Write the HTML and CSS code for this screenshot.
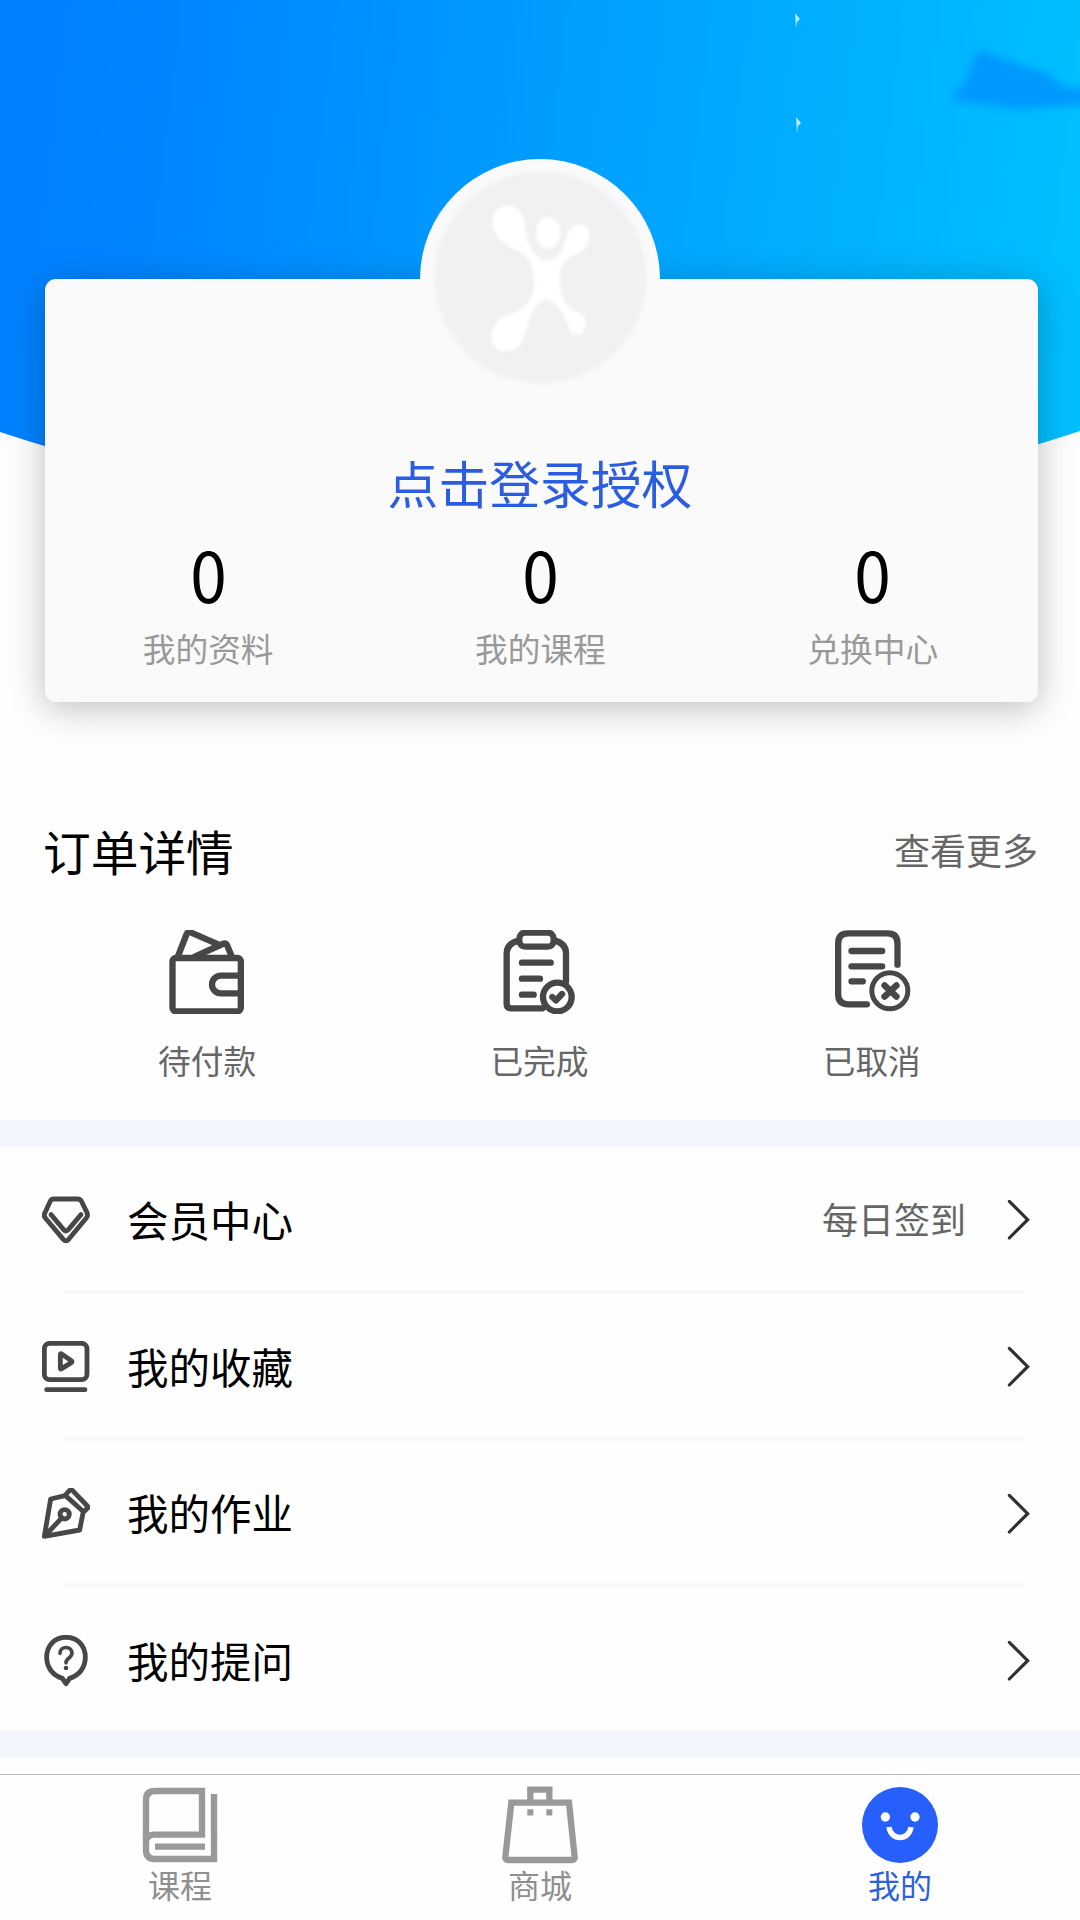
FILE: index.html
```html
<!DOCTYPE html>
<html lang="zh-CN">
<head>
<meta charset="utf-8">
<title>我的</title>
<link rel="stylesheet" href="styles.css">
</head>
<body>
<div class="page">
  <header class="hero">
    <svg class="hero-bg" viewBox="0 0 1080 560">
      <defs>
        <linearGradient id="sky" gradientUnits="userSpaceOnUse" x1="0" y1="0" x2="1090" y2="130">
          <stop offset="0" stop-color="#0081ff"/>
          <stop offset="0.14" stop-color="#0084ff"/>
          <stop offset="0.3" stop-color="#008fff"/>
          <stop offset="0.52" stop-color="#009eff"/>
          <stop offset="0.75" stop-color="#00afff"/>
          <stop offset="1" stop-color="#00bfff"/>
        </linearGradient>
        <filter id="soft" x="-20%" y="-30%" width="140%" height="160%"><feGaussianBlur stdDeviation="4"/></filter>
      </defs>
      <path d="M0 0H1080V431Q540 610 0 432Z" fill="url(#sky)"/>
      <path d="M950 100L964 84L978 50L1030 68L1048 74L1062 86L1090 91V104L1020 109Z" fill="#0099ff" filter="url(#soft)"/>
      <path d="M795 13l5 6-3 3-1 6zM796 117l5 6-3 3-1 7z" fill="#b5ecf5"/>
    </svg>
    <section class="card">
      <div class="avatar">
        <svg viewBox="0 0 240 240">
          <defs><filter id="haze"><feGaussianBlur stdDeviation="2"/></filter></defs>
          <circle cx="120.500" cy="118.500" r="106" fill="#f1f1f2" filter="url(#haze)"/>
          <g transform="translate(-20 -19) scale(.33333)" fill="#fff" filter="url(#glow)">
            <path d="M278 245C275 205 320 185 350 205C375 225 372 250 378 285C390 325 405 355 440 364C475 355 488 335 497 300C505 240 565 240 568 285C568 320 548 335 520 347C490 360 480 380 480 410C480 450 485 480 510 505C540 520 558 520 557 555C552 595 515 590 508 570C500 540 490 515 465 492Q438 465 410 495C390 520 385 550 372 590C350 655 280 640 275 598C274 545 310 525 345 517C375 505 398 480 402 440C404 405 400 370 375 345C345 322 282 310 278 245Z"/>
            <ellipse cx="445" cy="278" rx="36" ry="48"/>
          </g>
          <defs><filter id="glow"><feGaussianBlur stdDeviation="5"/></filter></defs>
        </svg>
      </div>
      <h1 class="login">点击登录授权</h1>
      <div class="stats">
        <div class="stat"><b>0</b><span>我的资料</span></div>
        <div class="stat"><b>0</b><span>我的课程</span></div>
        <div class="stat"><b>0</b><span>兑换中心</span></div>
      </div>
    </section>
  </header>

  <section class="orders">
    <div class="orders-head"><h2>订单详情</h2><span>查看更多</span></div>
    <div class="order-list">
      <div class="order">
        <svg class="order-icon" viewBox="112.5 90 240 252">
          <rect x="129" y="174" width="205" height="160" rx="10"/>
          <path d="M334 227H274a26 26 0 0 0 0 53H334M145 170L171 103Q175 94 185 98L266 133M196 170L279 132Q289 128 293 136L306 168"/>
        </svg><span>待付款</span>
      </div>
      <div class="order">
        <svg class="order-icon" viewBox="120 90 240 252">
          <path d="M178 122C155 128 143 140 143 160V312Q143 325 156 325H250M288 122C310 128 321 140 321 160V245"/>
          <rect x="181" y="98" width="103" height="42" rx="18"/>
          <path d="M189 188H275M189 236H243M189 284H224"/>
          <circle cx="295" cy="291" r="43"/>
          <path d="M280 291L291 301L309 282"/>
        </svg><span>已完成</span>
      </div>
      <div class="order">
        <svg class="order-icon" viewBox="127.5 90 240 252">
          <path d="M324 194V130Q324 100 294 100H176Q146 100 146 130V283Q146 313 176 313H232"/>
          <path d="M186 153H278M186 199H278M186 244H220"/>
          <circle cx="301" cy="272" r="54" stroke-width="15"/>
          <path d="M285 256L321 290M321 256L285 290"/>
        </svg><span>已取消</span>
      </div>
    </div>
  </section>

  <nav class="menu">
    <div class="row">
      <svg class="row-icon" viewBox="66 72 144 156"><path d="M101 87H173Q180 87 184 93L201 128Q205 137 199 144L146 208Q138 217 130 208L76 144Q70 137 75 128L91 93Q94 87 101 87Z"/><path d="M93 134L131 179Q138 187 145 179L183 134"/></svg>
      <span class="row-name">会员中心</span><span class="row-note">每日签到</span>
      <svg class="arrow" viewBox="648 87 72 126"><path d="M658 94L713 149L658 204"/></svg>
    </div>
    <div class="row">
      <svg class="row-icon" viewBox="66 513 144 156"><rect x="73" y="520" width="128" height="109" rx="16"/><path d="M80 659H195M121 554V595Q121 599 125 596L154 578Q158 575 154 572L125 552Q121 549 121 554Z"/></svg>
      <span class="row-name">我的收藏</span>
      <svg class="arrow" viewBox="648 87 72 126"><path d="M658 94L713 149L658 204"/></svg>
    </div>
    <div class="row">
      <svg class="row-icon" viewBox="66 84 144 156"><path d="M138 106L92 117L73 229L179 210L190 154M77 225L126 173M148 92L138 103Q136 106 139 109L188 153Q191 156 194 153L202 145Q205 142 202 138L158 92Q153 87 148 92Z"/><circle cx="134" cy="163" r="14"/></svg>
      <span class="row-name">我的作业</span>
      <svg class="arrow" viewBox="648 87 72 126"><path d="M658 94L713 149L658 204"/></svg>
    </div>
    <div class="row">
      <svg class="row-icon" viewBox="66 525 144 156"><path d="M127 655C98 646 80 622 80 592C80 555 105 532 138 532C171 532 196 555 196 592C196 622 178 646 149 655L138 671Z"/><path class="mark" d="M120 580C120 557 156 557 156 579C156 594 138 594 138 608"/><circle class="solid" cx="138" cy="624" r="7"/></svg>
      <span class="row-name">我的提问</span>
      <svg class="arrow" viewBox="648 87 72 126"><path d="M658 94L713 149L658 204"/></svg>
    </div>
  </nav>

  <footer class="tabs">
    <div class="tab">
      <svg class="tab-icon" viewBox="123 198 234 234"><path d="M138 390V240Q138 213 165 213H306V344H164Q138 344 138 367V390Q138 417 164 417H342V222M165 380H315"/></svg>
      <span>课程</span>
    </div>
    <div class="tab">
      <svg class="tab-icon" viewBox="123 198 234 234"><path d="M154 248H327L344 411Q345 420 335 420H145Q135 420 136 411ZM211 248V209H268V248"/><path d="M202 277H220M259 277H277"/></svg>
      <span>商城</span>
    </div>
    <div class="tab active">
      <svg class="tab-icon" viewBox="123 198 234 234"><circle class="face" cx="240" cy="315" r="114"/><circle class="eye" cx="196" cy="291" r="14"/><circle class="eye" cx="285" cy="291" r="14"/><path class="smile" d="M207 321C212 363 268 363 273 321"/></svg>
      <span>我的</span>
    </div>
  </footer>
</div>
</body>
</html>
```
FILE: styles.css
```css
* { box-sizing: border-box; }
body {
  margin: 0;
  background: #fefefe;
  color: #000;
  font-family: "Noto Sans CJK SC", sans-serif;
}
h1, h2 { margin: 0; font-weight: 400; }
svg { display: block; flex: none; }
.page {
  display: flex;
  flex-direction: column;
  width: 1080px;
  height: 1920px;
  overflow: hidden;
}
.hero {
  position: relative;
  height: 792px;
  padding: 279px 42px 0 45px;
}
.hero-bg { position: absolute; left: 0; top: 0; width: 1080px; height: 560px; }
.card {
  position: relative;
  height: 423px;
  padding-top: 163px;
  border-radius: 11px;
  background: #fafafa;
  box-shadow: 0 6px 36px rgba(0, 0, 0, .26);
}
.avatar {
  position: absolute;
  left: 375px;
  top: -120px;
  width: 240px;
  height: 240px;
  border-radius: 50%;
  background: #fafafa;
}
.login {
  color: #2b5de3;
  font-size: 50.8px;
  line-height: 80px;
  text-align: center;
  margin-right: 3px;
}
.stats {
  display: grid;
  grid-template-columns: repeat(3, 332.3px);
  margin-left: -3px;
}
.stat { display: flex; flex-direction: column; align-items: center; }
.stat b { font-size: 70px; font-weight: 400; line-height: 101px; transform: scaleX(.94); }
.stat span { color: #999; font-size: 32.7px; line-height: 50px; }

.orders { height: 328px; padding: 27px 42px 0; }
.orders-head { display: flex; align-items: center; justify-content: space-between; height: 64px; }
.orders-head h2 { margin-left: 1px; font-size: 47.7px; line-height: 64px; }
.orders-head span { margin-bottom: 4px; color: #666; font-size: 36px; line-height: 60px; }
.order-list { display: grid; grid-template-columns: repeat(3, 332.3px); margin-left: -1px; padding-top: 47px; }
.order { display: flex; flex-direction: column; align-items: center; }
.order span { margin-top: 21px; color: #666; font-size: 32.7px; line-height: 50px; }
.order-icon { width: 80px; height: 84px; }
.order-icon, .row-icon {
  fill: none;
  stroke: #474747;
  stroke-width: 19;
  stroke-linecap: round;
  stroke-linejoin: round;
}

.menu {
  height: 638px;
  border-top: 27px solid #f3f6fd;
  border-bottom: 28px solid #f2f6fc;
}
.row {
  position: relative;
  display: flex;
  align-items: center;
  height: 146.8px;
  padding: 0 50px 0 42px;
}
.row:last-child { height: 143px; padding-top: 5px; }
.row:not(:last-child)::after {
  content: "";
  position: absolute;
  left: 64px;
  right: 56px;
  bottom: 0;
  height: 4px;
  background: #f8f8fa;
}
.row-icon { width: 48px; height: 52px; stroke-width: 14.5; }
.row-icon .solid { fill: #474747; stroke: none; }
.row-icon .mark { stroke-width: 11; }
.row-name { flex: 1; margin: 0 0 3px 37px; font-size: 41.5px; line-height: 60px; }
.row-note { margin: 0 40px 4px 0; color: #666; font-size: 36px; line-height: 60px; }
.arrow {
  width: 24px;
  height: 42px;
  fill: none;
  stroke: #303033;
  stroke-width: 9.5;
  stroke-linecap: round;
}

.tabs {
  display: grid;
  grid-template-columns: repeat(3, 1fr);
  height: 146px;
  margin-top: 16px;
  padding-top: 11px;
  border-top: 1px solid #b8b8b8;
}
.tab { display: flex; flex-direction: column; align-items: center; color: #8f8f8f; }
.tab-icon { width: 78px; height: 78px; fill: none; stroke: #999; stroke-width: 19; }
.tab span { margin-top: -2px; font-size: 32px; line-height: 44px; }
.tab.active { color: #2e62d9; }
.tab-icon .face { fill: #265ffc; stroke: none; }
.tab-icon .eye { fill: #fff; stroke: none; }
.tab-icon .smile { stroke: #fff; stroke-width: 16; }
```
